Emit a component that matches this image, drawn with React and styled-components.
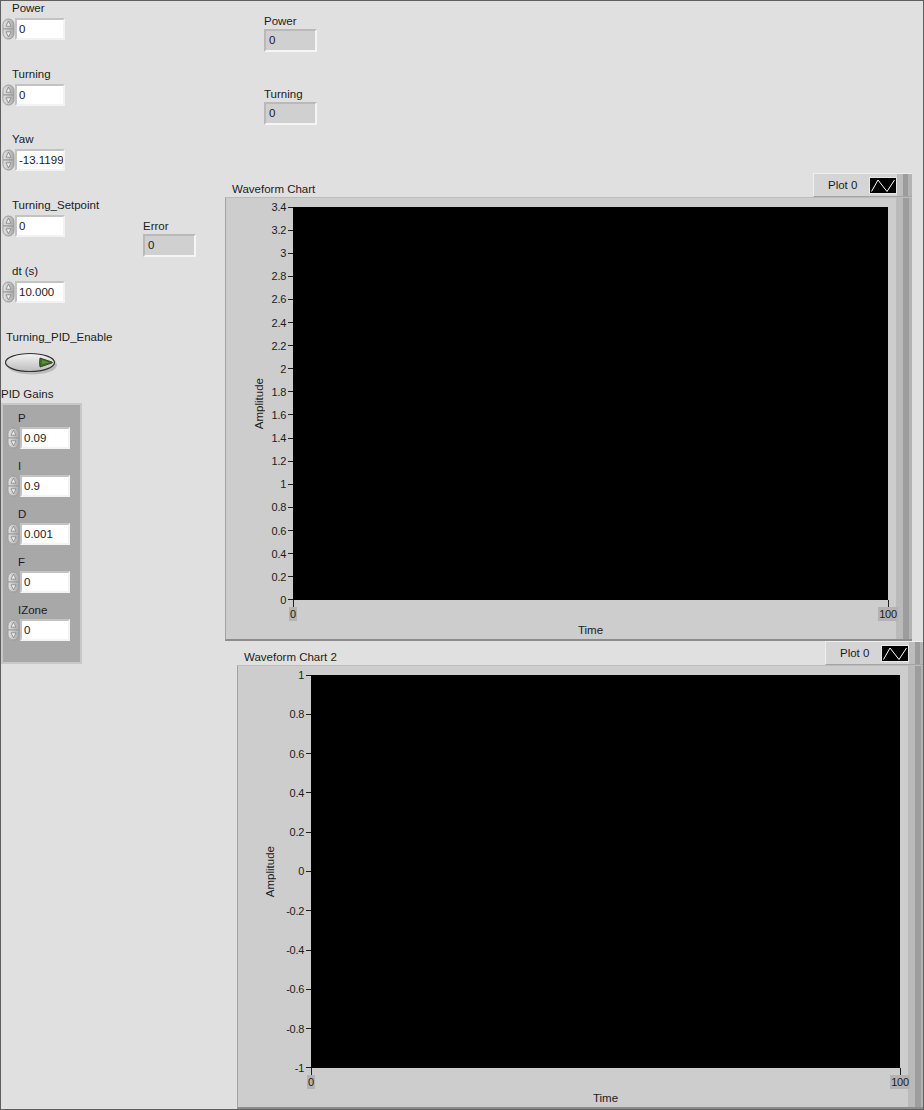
import React from "react";
import styled, { createGlobalStyle } from "styled-components";

const GlobalStyle = createGlobalStyle`
    html, body { margin:0; padding:0; background:#e0e0e0; }
    body { font-family:"Liberation Sans", Arial, sans-serif; }
`;

const Panel = styled.div`
    width:924px;height:1110px;box-sizing:border-box;border:1px solid #5f5f5f;background:#e0e0e0;
    display:grid;grid-template-columns:224px 1fr;overflow:hidden;color:#1c1c1c;font-size:11.5px;
`;
const Column = styled.div`display:flex;flex-direction:column;align-items:flex-start;min-width:0;`;
const Field = styled.div`
    display:flex;flex-direction:column;align-items:flex-start;flex-shrink:0;
    margin-top:${p => p.$mt || 0}px;margin-left:${p => p.$ml || 0}px;
`;
const Label = styled.span`display:block;height:15px;line-height:15px;padding-left:${p => p.$indent || 0}px;white-space:nowrap;`;
const InputRow = styled.div`display:flex;margin-top:${p => p.$gap}px;`;
const NumBox = styled.div`
    width:50px;height:22px;box-sizing:border-box;border:2px solid;border-color:#c3c3c3 #f3f3f3 #f3f3f3 #c3c3c3;
    background:#fff;padding-left:2px;line-height:18px;overflow:hidden;white-space:nowrap;color:#1a1a1a;
`;
const IndBox = styled(NumBox)`
    width:53px;height:23px;background:#d0d0d0;padding-left:3px;line-height:19px;border-color:#b9b9b9 #f5f5f5 #f5f5f5 #b9b9b9;
`;
const Row = styled.div`
    display:grid;grid-template-columns:${p => p.$col}px auto;align-items:start;margin-top:${p => p.$mt || 0}px;
`;
const ToggleWrap = styled.div`margin:5px 0 0 2px;display:flex;`;
const Cluster = styled.div`
    margin-top:1px;width:81px;height:261px;box-sizing:border-box;border:2px solid #c8c8c8;background:#a8a8a8;
    padding:6px 0 0 4px;display:flex;flex-direction:column;gap:10px;
`;

const ChartBlock = styled.div`
    width:687px;flex-shrink:0;display:flex;flex-direction:column;
    margin-left:${p => p.$ml || 0}px;margin-top:${p => p.$mt || 0}px;
`;
const ChartHead = styled.div`height:24px;display:flex;align-items:flex-end;`;
const ChartTitle = styled.span`line-height:15px;padding-left:7px;white-space:nowrap;`;
const Legend = styled.div`
    margin-left:auto;align-self:stretch;width:99px;box-sizing:border-box;display:flex;align-items:center;padding-left:14px;
    border-top:1px solid #eeeeee;border-left:1px solid #eeeeee;border-bottom:1px solid #a4a4a4;
    background:linear-gradient(to left,#b4b4b4 0 4px,#9c9c9c 4px 9px,#bdbdbd 9px 15px,#d5d5d5 15px);
`;
const LegendName = styled.span`width:41px;line-height:15px;white-space:nowrap;`;
const LegendIcon = styled.div`width:28px;height:17px;display:flex;`;
const Frame = styled.div`
    height:444px;box-sizing:border-box;flex-shrink:0;
    border-top:1px solid #bcbcbc;border-left:1px solid #a2a2a2;border-bottom:2px solid #8c8c8c;
    background:linear-gradient(to left,#b2b2b2 0 3px,#9d9d9d 3px 9px,#bababa 9px 16px,#cdcdcd 16px);
    display:grid;grid-template-columns:${p => p.$axis}px ${p => p.$plot}px 1fr;grid-template-rows:9px 393px 1fr;
`;
const YArea = styled.div`grid-column:1;grid-row:2;display:flex;align-items:stretch;`;
const AxisName = styled.span`
    writing-mode:vertical-rl;transform:rotate(180deg);line-height:14px;align-self:center;
    margin-left:${p => p.$ml}px;white-space:nowrap;
`;
const YTicks = styled.div`flex:1;margin:-7px 0;display:flex;flex-direction:column;justify-content:space-between;align-items:flex-end;`;
const YTick = styled.div`height:14px;display:flex;align-items:center;font-size:11px;letter-spacing:-0.3px;line-height:14px;`;
const YTickLine = styled.div`width:5px;height:1px;background:#1e1e1e;margin-left:2px;`;
const Plot = styled.div`grid-column:2;grid-row:2;background:#000;`;
const XArea = styled.div`grid-column:2;grid-row:3;display:flex;flex-direction:column;align-items:center;`;
const XTicks = styled.div`align-self:stretch;margin:0 -15px;display:flex;justify-content:space-between;`;
const XTick = styled.div`width:30px;display:flex;flex-direction:column;align-items:center;`;
const XTickLine = styled.div`width:1px;height:7px;background:#1e1e1e;`;
const XTickLabel = styled.span`background:#b3b3b3;padding:0 1px;font-size:11px;line-height:14px;letter-spacing:-0.3px;`;
const XTitle = styled.span`margin-top:2px;line-height:15px;`;

const Spinner = () => (
    <svg width="13" height="22" viewBox="0 0 13 22">
        <defs>
            <linearGradient id="spin" x1="0" y1="0" x2="1" y2="0">
                <stop offset="0" stopColor="#e4e4e4" />
                <stop offset="1" stopColor="#a9a9a9" />
            </linearGradient>
        </defs>
        <path d="M1 11V6.5a5.5 5.5 0 0 1 11 0V11Z" fill="url(#spin)" stroke="#9a9a9a" />
        <path d="M1 11v4.5a5.5 5.5 0 0 0 11 0V11Z" fill="url(#spin)" stroke="#9a9a9a" />
        <path d="M6.5 3.2 9 8.2H4Z" fill="#f0f0f0" stroke="#777" strokeWidth="0.7" />
        <path d="M6.5 18.8 9 13.8H4Z" fill="#f0f0f0" stroke="#777" strokeWidth="0.7" />
    </svg>
);

const Toggle = () => (
    <svg width="56" height="27" viewBox="0 0 56 27">
        <defs>
            <linearGradient id="tog" x1="0" y1="0" x2="0" y2="1">
                <stop offset="0" stopColor="#f4f4f4" />
                <stop offset="1" stopColor="#bcbcbc" />
            </linearGradient>
        </defs>
        <ellipse cx="29" cy="15" rx="25" ry="9.5" fill="#9d9d9d" opacity="0.55" />
        <ellipse cx="27" cy="12.5" rx="24.5" ry="9" fill="url(#tog)" stroke="#333" strokeWidth="1.2" />
        <path d="M37 8Q36 12.5 37 17L49 13Q50 12.5 49 12Z" fill="#3f6d27" stroke="#1e3a10" strokeWidth="0.8" />
        <path d="M39 10 46 12.5 39 14Z" fill="#6aa040" opacity="0.7" />
    </svg>
);

const PlotIcon = () => (
    <LegendIcon>
        <svg width="28" height="17" viewBox="0 0 28 17">
            <rect x="0.5" y="0.5" width="27" height="16" fill="#000" stroke="#e8e8e8" />
            <polyline points="2.5,14.5 9,3 18,14.5 25.5,3" fill="none" stroke="#fff" strokeWidth="1" />
        </svg>
    </LegendIcon>
);

const NumericControl = ({ label, value, mt, ml = 1, indent = 10, gap = 2 }) => (
    <Field $mt={mt} $ml={ml}>
        <Label $indent={indent}>{label}</Label>
        <InputRow $gap={gap}>
            <Spinner />
            <NumBox>{value}</NumBox>
        </InputRow>
    </Field>
);

const Indicator = ({ label, value, mt, ml }) => (
    <Field $mt={mt} $ml={ml}>
        <Label>{label}</Label>
        <InputRow $gap={0}>
            <IndBox>{value}</IndBox>
        </InputRow>
    </Field>
);

const fmt = v => {
    const s = (Math.round(v * 10) / 10).toFixed(1);
    return s.endsWith(".0") ? s.slice(0, -2) : s;
};

const Chart = ({ title, ml, mt, axis, plot, nameMl, ticks }) => (
    <ChartBlock $ml={ml} $mt={mt}>
        <ChartHead>
            <ChartTitle>{title}</ChartTitle>
            <Legend>
                <LegendName>Plot 0</LegendName>
                <PlotIcon />
            </Legend>
        </ChartHead>
        <Frame $axis={axis} $plot={plot}>
            <YArea>
                <AxisName $ml={nameMl}>Amplitude</AxisName>
                <YTicks>
                    {ticks.map(t => (
                        <YTick key={t}>
                            {t}
                            <YTickLine />
                        </YTick>
                    ))}
                </YTicks>
            </YArea>
            <Plot />
            <XArea>
                <XTicks>
                    <XTick><XTickLine /><XTickLabel>0</XTickLabel></XTick>
                    <XTick><XTickLine /><XTickLabel>100</XTickLabel></XTick>
                </XTicks>
                <XTitle>Time</XTitle>
            </XArea>
        </Frame>
    </ChartBlock>
);

const ticks1 = Array.from({ length: 18 }, (_, i) => fmt(3.4 - 0.2 * i));
const ticks2 = Array.from({ length: 11 }, (_, i) => fmt(1 - 0.2 * i));

const App = () => (
    <>
        <GlobalStyle />
        <Panel>
            <Column>
                <NumericControl label="Power" value="0" mt={0} />
                <NumericControl label="Turning" value="0" mt={27} />
                <NumericControl label="Yaw" value="-13.11994" mt={26} />
                <Row $mt={27} $col={142}>
                    <NumericControl label="Turning_Setpoint" value="0" />
                    <Indicator label="Error" value="0" mt={21} />
                </Row>
                <NumericControl label="dt (s)" value="10.000" mt={7} />
                <Field $mt={27} $ml={5}>
                    <Label>Turning_PID_Enable</Label>
                </Field>
                <ToggleWrap><Toggle /></ToggleWrap>
                <Field $mt={10}>
                    <Label>PID Gains</Label>
                </Field>
                <Cluster>
                    <NumericControl label="P" value="0.09" ml={0} indent={11} gap={1} />
                    <NumericControl label="I" value="0.9" ml={0} indent={11} gap={1} />
                    <NumericControl label="D" value="0.001" ml={0} indent={11} gap={1} />
                    <NumericControl label="F" value="0" ml={0} indent={11} gap={1} />
                    <NumericControl label="IZone" value="0" ml={0} indent={11} gap={1} />
                </Cluster>
            </Column>
            <Column>
                <Indicator label="Power" value="0" mt={13} ml={39} />
                <Indicator label="Turning" value="0" mt={35} ml={39} />
                <Chart title="Waveform Chart" mt={48} ml={0} axis={67} plot={595} nameMl={26} ticks={ticks1} />
                <Chart title="Waveform Chart 2" ml={12} axis={73} plot={589} nameMl={25} ticks={ticks2} />
            </Column>
        </Panel>
    </>
);

export default App;
